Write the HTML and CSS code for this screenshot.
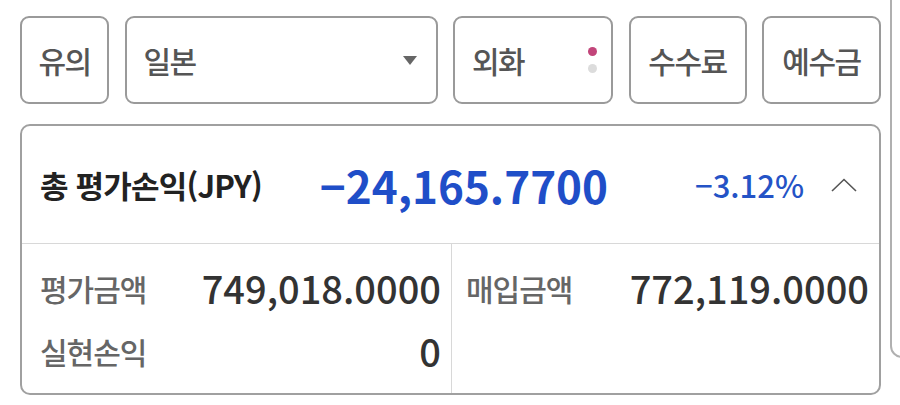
FILE: index.html
```html
<!DOCTYPE html>
<html lang="ko">
<head>
<meta charset="utf-8">
<link rel="stylesheet" href="styles.css">
</head>
<body>
<div class="track">
  <section class="slide">
    <div class="toolbar">
      <button class="btn btn-sq">유의</button>
      <button class="btn btn-select"><span>일본</span><span class="caret"></span></button>
      <button class="btn btn-fx"><span>외화</span><span class="dots"><i class="dot on"></i><i class="dot"></i></span></button>
      <button class="btn btn-fee">수수료</button>
      <button class="btn btn-dep">예수금</button>
    </div>
    <div class="card">
      <div class="card-head">
        <span class="title">총 평가손익(JPY)</span>
        <span class="total">−24,165.7700</span>
        <span class="rate">−3.12%</span>
        <svg class="chev" width="26" height="14" viewBox="0 0 26 14"><path d="M1 13 L13 1.5 L25 13" fill="none" stroke="#555" stroke-width="1.6"/></svg>
      </div>
      <div class="card-body">
        <div class="col col-left">
          <div class="row"><span class="label">평가금액</span><span class="value">749,018.0000</span></div>
          <div class="row"><span class="label">실현손익</span><span class="value">0</span></div>
        </div>
        <div class="col col-right">
          <div class="row"><span class="label">매입금액</span><span class="value">772,119.0000</span></div>
        </div>
      </div>
    </div>
  </section>
  <section class="slide-next"></section>
</div>
</body>
</html>
```

FILE: styles.css
```css
html, body {
  margin: 0;
  padding: 0;
  background: #fff;
}
body {
  width: 900px;
  height: 405px;
  overflow: hidden;
  font-family: "Noto Sans CJK KR", "Noto Sans", sans-serif;
}
.track {
  display: flex;
  align-items: flex-start;
  gap: 9px;
}
.slide {
  flex: 0 0 861px;
  box-sizing: border-box;
  padding: 16px 0 0 20px;
}
.toolbar {
  display: flex;
  gap: 15.5px;
  height: 88px;
}
.btn {
  box-sizing: border-box;
  height: 88px;
  border: 2px solid #9a9a9a;
  border-radius: 9px;
  background: #fff;
  font-family: inherit;
  font-size: 30px;
  font-weight: 500;
  color: #555;
  letter-spacing: -1.5px;
  display: flex;
  align-items: center;
  padding: 0;
}
.btn-sq { width: 89px; justify-content: center; }
.btn-select { width: 313px; padding: 0 18px 0 17px; justify-content: space-between; }
.caret {
  width: 0; height: 0;
  border-left: 7px solid transparent;
  border-right: 7px solid transparent;
  border-top: 9px solid #666;
  margin-right: 1px;
}
.btn-fx { width: 160px; padding: 0 14px 0 17px; justify-content: space-between; }
.dots { display: flex; flex-direction: column; gap: 8px; }
.dot { display: block; width: 9px; height: 9px; border-radius: 50%; background: #dcdcdc; }
.dot.on { background: #c2457a; }
.btn-fee { width: 118px; justify-content: center; }
.btn-dep { width: 119px; justify-content: center; }

.card {
  margin-top: 20px;
  width: 861px;
  height: 271px;
  box-sizing: border-box;
  border: 2px solid #a0a0a0;
  border-radius: 10px;
  display: flex;
  flex-direction: column;
}
.card-head {
  height: 117px;
  display: flex;
  align-items: center;
  padding: 0 22px 0 18px;
  border-bottom: 1px solid #d8d8d8;
}
.title {
  font-size: 31px;
  font-weight: 700;
  color: #222;
  letter-spacing: -0.8px;
}
.total {
  margin-left: 58px;
  font-size: 44px;
  font-weight: 700;
  color: #1f4ec8;
}
.rate {
  margin-left: auto;
  font-size: 31px;
  font-weight: 500;
  color: #2453c6;
}
.chev { margin-left: 27px; }

.card-body {
  flex: 1;
  display: flex;
}
.col {
  box-sizing: border-box;
}
.col-left {
  width: 430px;
  padding: 12px 10px 0 18px;
  border-right: 1px solid #d8d8d8;
}
.col-right {
  flex: 1;
  padding: 12px 10px 0 14px;
}
.row {
  height: 63px;
  display: flex;
  align-items: center;
  justify-content: space-between;
}
.label {
  font-size: 30px;
  font-weight: 500;
  color: #666;
  letter-spacing: -1px;
}
.value {
  font-size: 38px;
  font-weight: 500;
  color: #333;
}
.slide-next {
  flex: 0 0 60px;
  height: 370px;
  margin-top: -12px;
  box-sizing: border-box;
  border: 2px solid #b0b0b0;
  border-radius: 12px;
}
```
